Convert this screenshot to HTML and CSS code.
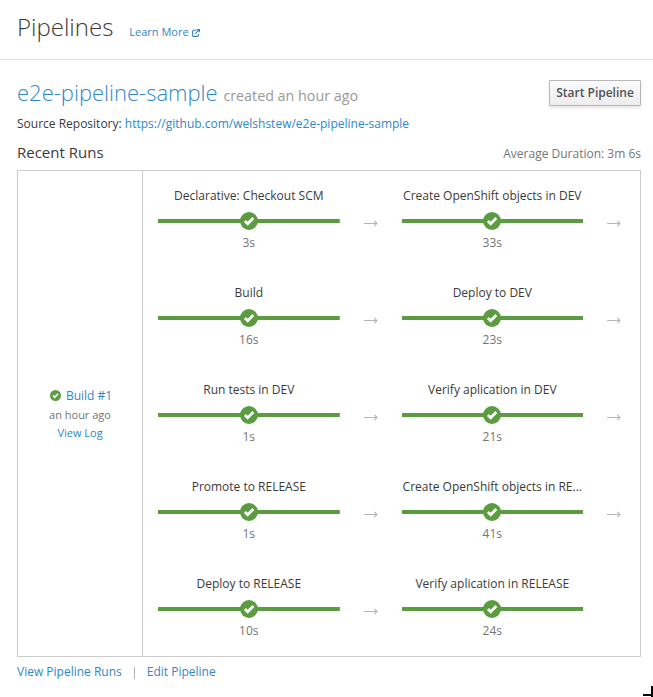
FILE: index.html
```html
<!DOCTYPE html>
<html lang="en">
<head>
<meta charset="utf-8">
<title>Pipelines</title>
<link rel="stylesheet" href="styles.css">
</head>
<body>
<svg class="defs" aria-hidden="true">
  <symbol id="ok" viewBox="0 0 18 18"><circle cx="9" cy="9" r="9" fill="#5b9c40"/><path d="M4.9 9 7.7 11.8 13.3 6.1" fill="none" stroke="#fff" stroke-width="2.8"/></symbol>
  <symbol id="next" viewBox="0 0 14 7"><path d="M0 3.5H13M10.3.8 13 3.5 10.3 6.2" fill="none" stroke="#b5b5b5" stroke-width="1.1"/></symbol>
</svg>
<header class="page-header">
  <h1>Pipelines</h1>
  <a class="learn">Learn More<svg class="external" viewBox="0 0 9 9"><path d="M5 1.5H1.8Q.7 1.5.7 2.6V7.2Q.7 8.3 1.8 8.3H6.1Q7.2 8.3 7.2 7.2V5.3M3.4 5.5 7.7 1.2" fill="none" stroke="currentColor" stroke-width="1.2"/><path d="M4.8 0H9V4.2Z" fill="currentColor"/></svg></a>
</header>
<main>
  <div class="title-row">
    <h2><a>e2e-pipeline-sample</a> <small>created an hour ago</small></h2>
    <button>Start Pipeline</button>
  </div>
  <p class="repo">Source Repository: <a>https://github.com/welshstew/e2e-pipeline-sample</a></p>
  <div class="runs-head"><h3>Recent Runs</h3><span class="average">Average Duration: 3m 6s</span></div>
  <section class="run">
    <div class="summary">
      <div class="build"><svg><use href="#ok"/></svg><a>Build #1</a></div>
      <div class="when">an hour ago</div>
      <a class="log">View Log</a>
    </div>
    <div class="stages">
      <div class="stage"><div class="name">Declarative: Checkout SCM</div><div class="bar"><svg><use href="#ok"/></svg></div><div class="time">3s</div></div><svg class="arrow"><use href="#next"/></svg>
      <div class="stage"><div class="name">Create OpenShift objects in DEV</div><div class="bar"><svg><use href="#ok"/></svg></div><div class="time">33s</div></div><svg class="arrow"><use href="#next"/></svg>
      <div class="stage"><div class="name">Build</div><div class="bar"><svg><use href="#ok"/></svg></div><div class="time">16s</div></div><svg class="arrow"><use href="#next"/></svg>
      <div class="stage"><div class="name">Deploy to DEV</div><div class="bar"><svg><use href="#ok"/></svg></div><div class="time">23s</div></div><svg class="arrow"><use href="#next"/></svg>
      <div class="stage"><div class="name">Run tests in DEV</div><div class="bar"><svg><use href="#ok"/></svg></div><div class="time">1s</div></div><svg class="arrow"><use href="#next"/></svg>
      <div class="stage"><div class="name">Verify aplication in DEV</div><div class="bar"><svg><use href="#ok"/></svg></div><div class="time">21s</div></div><svg class="arrow"><use href="#next"/></svg>
      <div class="stage"><div class="name">Promote to RELEASE</div><div class="bar"><svg><use href="#ok"/></svg></div><div class="time">1s</div></div><svg class="arrow"><use href="#next"/></svg>
      <div class="stage"><div class="name">Create OpenShift objects in RE...</div><div class="bar"><svg><use href="#ok"/></svg></div><div class="time">41s</div></div><svg class="arrow"><use href="#next"/></svg>
      <div class="stage"><div class="name">Deploy to RELEASE</div><div class="bar"><svg><use href="#ok"/></svg></div><div class="time">10s</div></div><svg class="arrow"><use href="#next"/></svg>
      <div class="stage"><div class="name">Verify aplication in RELEASE</div><div class="bar"><svg><use href="#ok"/></svg></div><div class="time">24s</div></div>
    </div>
  </section>
  <footer><a>View Pipeline Runs</a><span class="divider"></span><a>Edit Pipeline</a></footer>
</main>
<div class="corner"></div>
</body>
</html>
```
FILE: styles.css
```css
* { box-sizing: border-box; }
body { margin: 0; height: 697px; overflow: hidden; position: relative; background: #fff; color: #3a3a3a; font: 12px/20px "Open Sans", sans-serif; }
h1, h2, h3, p { margin: 0; font-weight: 400; }
a { color: #2f87c9; }
.defs { position: absolute; width: 0; height: 0; }
.page-header { height: 60px; padding: 11px 17px 0; border-bottom: 1px solid #ddd; display: flex; align-items: flex-start; }
h1 { font-size: 24px; font-weight: 300; line-height: 31px; }
.learn { font-size: 11px; margin: 11px 0 0 16px; display: flex; align-items: center; }
.external { width: 8px; height: 8px; margin: 1px 0 0 3px; }
main { padding: 19px 12px 0 17px; }
.title-row { display: flex; justify-content: space-between; align-items: flex-start; height: 35px; }
h2 { font-size: 22px; font-weight: 300; line-height: 30px; margin-top: -2px; }
small { font-size: 14.3px; font-weight: 400; color: #999; }
button { width: 92px; height: 26px; margin-top: 1px; padding: 0; border: 1px solid #b7b7b7; border-radius: 1px; background: linear-gradient(#fafafa, #ededed); box-shadow: 0 2px 3px rgba(3,3,3,.1); color: #4d5258; font: 600 12px/22px "Open Sans", sans-serif; }
.repo { height: 29px; }
.runs-head { display: flex; justify-content: space-between; height: 27px; }
h3 { font-size: 15px; line-height: 18px; }
.average { color: #757575; line-height: 21px; }
.run { height: 487px; border: 1px solid #ccc; display: flex; }
.summary { flex: none; width: 125px; border-right: 1px solid #ccc; display: flex; flex-direction: column; align-items: center; justify-content: center; }
.build { display: flex; align-items: center; gap: 5px; margin-left: 2px; }
.build svg { width: 11px; height: 11px; }
.when, .log { font-size: 11px; line-height: 18px; }
.when { color: #757575; }
.stages { display: grid; grid-template-columns: 181.6px 62px 181.4px 62px; grid-auto-rows: 97px; padding-left: 15px; }
.stage { text-align: center; padding-top: 15px; }
.name { white-space: nowrap; }
.bar { height: 18px; margin-top: 6px; background: linear-gradient(#5b9c40, #5b9c40) center / 100% 4px no-repeat; }
.bar svg { display: block; width: 18px; height: 18px; margin: auto; }
.time { color: #757575; margin-top: 3px; }
.arrow { width: 14px; height: 7px; margin: 49px 0 0 24px; }
footer { display: flex; align-items: center; padding-top: 5px; }
.divider { width: 1px; height: 12px; margin: 1px 12px 0; background: #b5b5b5; }
.corner { position: absolute; right: 0; bottom: 0; width: 10px; height: 11px; background: linear-gradient(#000,#000) right top / 2px 11px no-repeat, linear-gradient(#000,#000) left 8px / 10px 2px no-repeat; }
```
